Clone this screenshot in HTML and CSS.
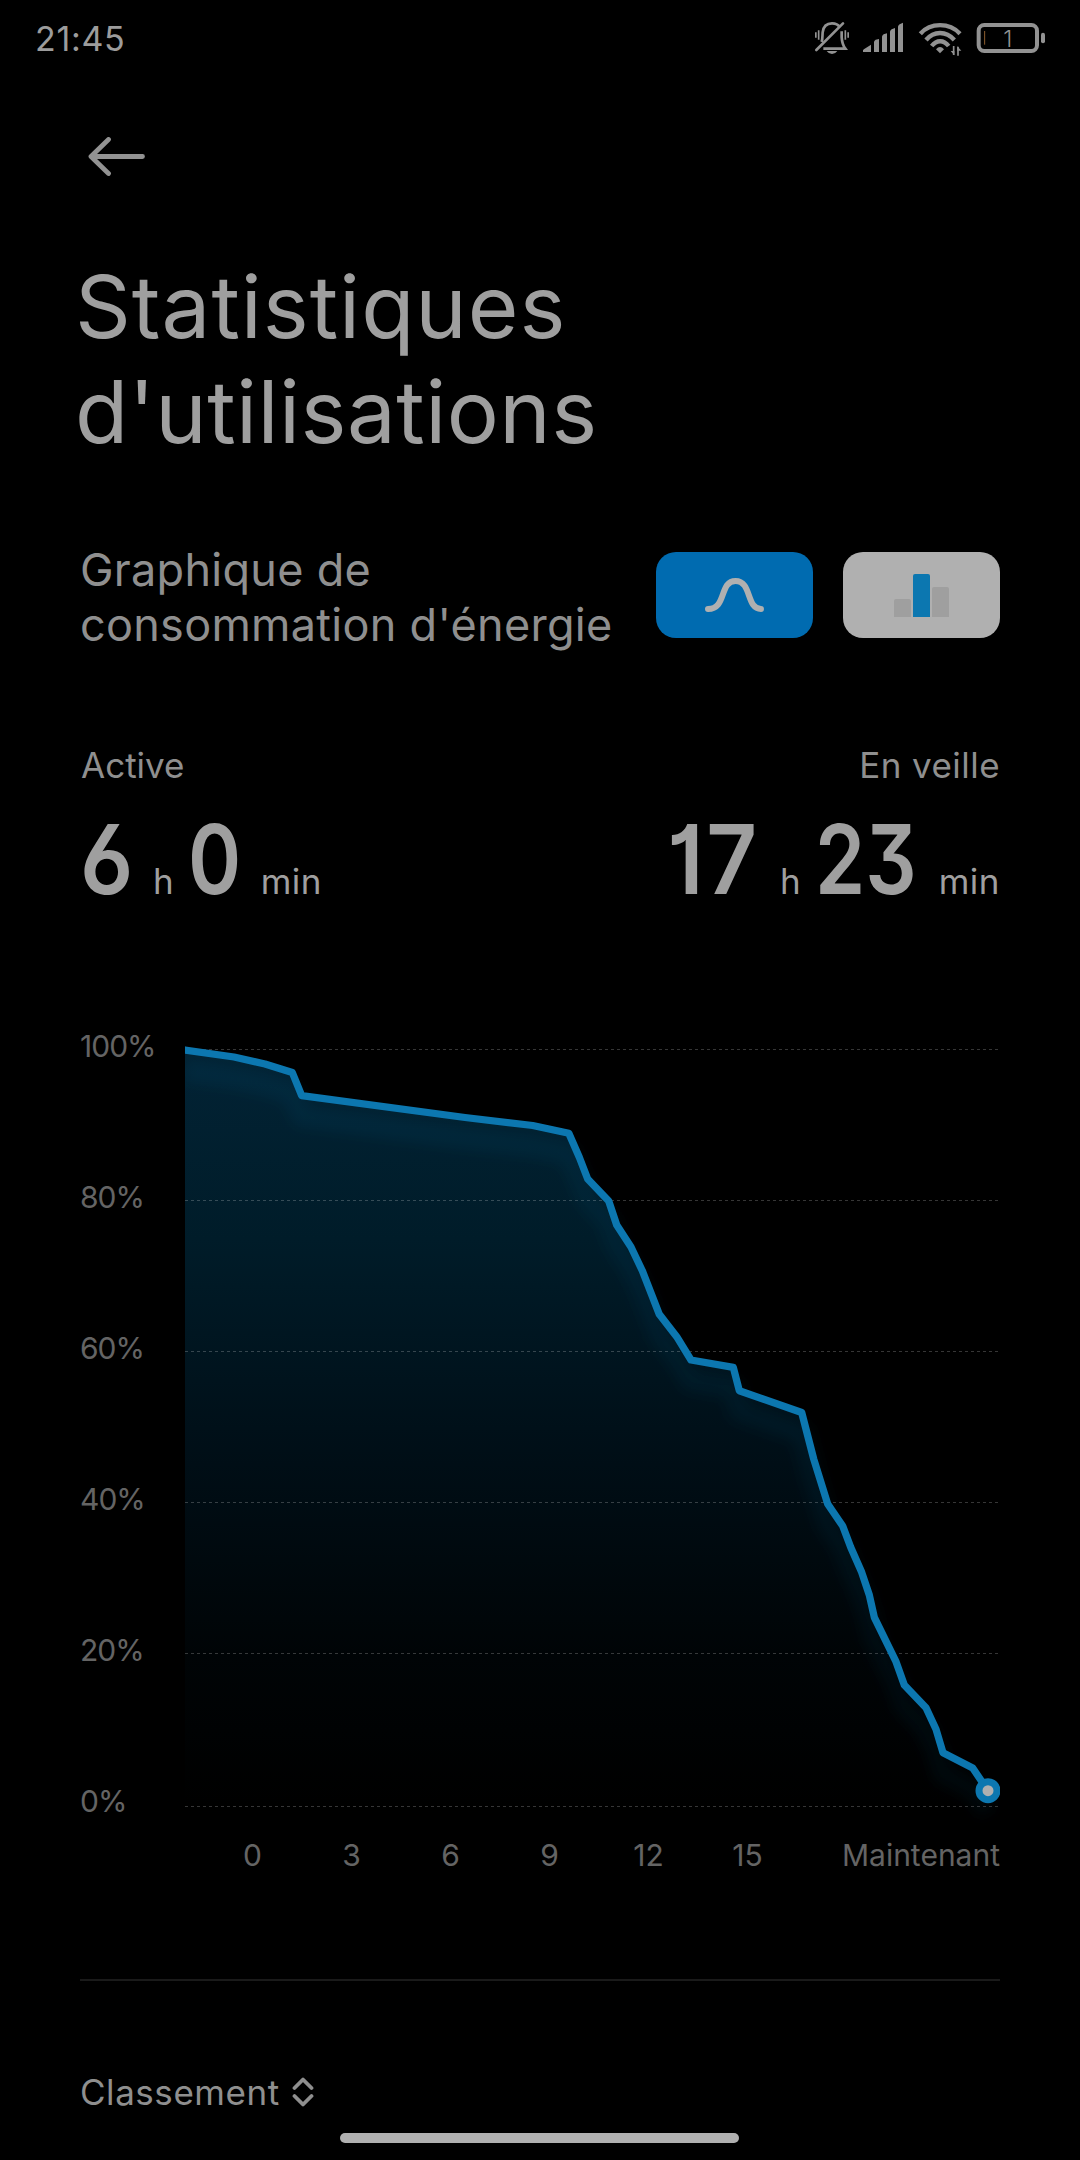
FILE: index.html
```
<!DOCTYPE html>
<html lang="fr">
<head>
	<meta charset="utf-8">
	<meta name="viewport" content="width=device-width, initial-scale=1">
	<title>Statistiques d'utilisations</title>
	<link rel="stylesheet" href="styles.css">
</head>
<body>
	<div class="status">
		<span class="clock">21:45</span>
		<div class="status-icons">
			<!-- muted bell -->
			<svg class="bell" viewBox="72 60 108 108" width="36" height="36">
				<g fill="none" stroke="#929292" stroke-width="8">
					<path d="M95 126 C98 116 97 108 98 97 C100 79 110 70 126 70 C137 70 145 74 150 82"/>
					<path d="M155 94 V112 C156 128 160 138 166 146 H100"/>
					<path d="M79 150 L159 70" stroke-linecap="round"/>
					<path d="M77.500 97 V113 M86 91 V119 M166 91 V119 M174.500 97 V113" stroke-width="5"/>
				</g>
				<path d="M110 153 H142 Q136 162 126 162 Q116 162 110 153Z" fill="#929292"/>
			</svg>
			<!-- signal strength -->
			<svg class="signal" viewBox="216 60 126 108" width="42" height="36">
				<path fill="#929292" d="M219 156 V151 Q220 148 224 146 L243 134 V156Z M252 156 V126 Q253 121 257 119 L267 117 V156Z M276 156 V110 Q277 105 281 103 L291 100 V156Z M300 156 V95 Q301 90 305 88 L315 84 V156Z M324 156 V80 Q325 75 329 73 L339 68 V156Z"/>
			</svg>
			<!-- wifi -->
			<svg class="wifi" viewBox="384 60 135 108" width="45" height="36">
				<g fill="none" stroke="#929292" stroke-width="13">
					<path d="M391 101 C422 67 478 67 510 101"/>
					<path d="M408 120 C432 92 468 92 493 120"/>
					<path d="M425 138 C440 119 461 119 476 138"/>
				</g>
				<path d="M438 148 Q450 134 462 148 L450 160Z" fill="#929292"/>
				<path d="M491 138 V165 M504 167 V140" stroke="#929292" stroke-width="5"/>
				<path d="M482 153 L493 166 V153Z M502 139 L514 152 H502Z" fill="#929292"/>
			</svg>
			<!-- battery at 1% -->
			<svg class="battery" viewBox="558 60 210 108" width="70" height="36">
				<rect x="566" y="75" width="175" height="78" rx="17" fill="none" stroke="#929292" stroke-width="12"/>
				<rect x="753" y="98" width="12" height="32" rx="6" fill="#929292"/>
				<rect x="582" y="93" width="3.500" height="41" fill="#7a5128"/>
				<text x="653" y="141" class="battery-text">1</text>
			</svg>
		</div>
	</div>

	<div class="nav">
		<svg viewBox="0 0 60 40" width="60" height="40">
			<path d="M20.500 2.500 L3 19.500 L20.500 36.500 M3.500 19.500 H54.500" fill="none" stroke="#929292" stroke-width="4.800" stroke-linecap="round" stroke-linejoin="round"/>
		</svg>
	</div>

	<h1 class="title">Statistiques<br>d'utilisations</h1>

	<div class="graph-head">
		<p class="graph-name">Graphique de<br>consommation d'énergie</p>
		<div class="switch">
			<button class="btn btn-on">
				<svg viewBox="0 0 157 86" width="157" height="86">
					<path d="M52 57 C71 57 63 29 79.500 29 C96 29 90 57 105 57" fill="none" stroke="#b0b0b0" stroke-width="6" stroke-linecap="round"/>
				</svg>
			</button>
			<button class="btn">
				<svg viewBox="0 0 157 86" width="157" height="86">
					<path d="M51 65 V49 Q51 47 53 47 H66 Q68 47 68 49 V65Z" fill="#9f9f9f"/>
					<path d="M70 65 V24 Q70 22 72 22 H85 Q87 22 87 24 V65Z" fill="#0c77b0"/>
					<path d="M89 65 V37 Q89 35 91 35 H104 Q106 35 106 37 V65Z" fill="#9f9f9f"/>
				</svg>
			</button>
		</div>
	</div>

	<div class="stats">
		<div class="stat">
			<p class="stat-label">Active</p>
			<p class="stat-value"><b class="num num-one wide">6</b><span class="hour">h</span><b class="num num-one">0</b><span class="minute">min</span></p>
		</div>
		<div class="stat stat-right">
			<p class="stat-label veille">En veille</p>
			<p class="stat-value"><b class="num num-hours wide">17</b><span class="hour">h</span><b class="num num-minutes">23</b><span class="minute">min</span></p>
		</div>
	</div>

	<div class="chart">
		<div class="y-axis">
			<span>100%</span>
			<span>80%</span>
			<span>60%</span>
			<span>40%</span>
			<span>20%</span>
			<span>0%</span>
		</div>
		<div class="plot">
			<svg viewBox="185 971 815 864" width="815" height="864">
				<defs>
					<linearGradient id="fill" gradientUnits="userSpaceOnUse" x1="0" y1="1050" x2="0" y2="1806">
						<stop offset="0" stop-color="#022335"/>
						<stop offset="0.250" stop-color="#001c29"/>
						<stop offset="0.500" stop-color="#001019"/>
						<stop offset="0.800" stop-color="#000406"/>
						<stop offset="1" stop-color="#000"/>
					</linearGradient>
					<linearGradient id="fade" gradientUnits="userSpaceOnUse" x1="0" y1="1050" x2="0" y2="1830">
						<stop offset="0" stop-color="#0c77b0" stop-opacity="0.085"/>
						<stop offset="1" stop-color="#0c77b0" stop-opacity="0.060"/>
					</linearGradient>
					<filter id="blur" filterUnits="userSpaceOnUse" x="165" y="1020" width="850" height="830">
						<feGaussianBlur stdDeviation="7"/>
					</filter>
				</defs>
				<path fill="url(#fill)" d="M185 1050 L234 1057 L265 1064 L292.300 1072.500 L301.700 1095.700 L465 1117.500 L532.700 1125.500 L568.800 1133.200 L579.300 1157.300 L587.700 1179 L608.700 1201 L616.700 1225 L631 1247 L642.300 1270.700 L659.300 1314.300 L676.700 1336.700 L691 1360 L733.300 1367.300 L739.300 1390.700 L801.700 1412.500 L813.700 1459 L827.700 1504 L842.700 1526 L850.700 1547.300 L861.700 1572.300 L869.300 1595 L874.300 1617.300 L896 1661.700 L904.300 1685 L926 1707.700 L936 1729.300 L943 1752.700 L972.700 1768 L988 1790.700 V1806 H185Z"/>
				<!-- soft glow under the curve -->
				<path transform="translate(0 21)" filter="url(#blur)" fill="none" stroke="url(#fade)" stroke-width="20" d="M185 1050 L234 1057 L265 1064 L292.300 1072.500 L301.700 1095.700 L465 1117.500 L532.700 1125.500 L568.800 1133.200 L579.300 1157.300 L587.700 1179 L608.700 1201 L616.700 1225 L631 1247 L642.300 1270.700 L659.300 1314.300 L676.700 1336.700 L691 1360 L733.300 1367.300 L739.300 1390.700 L801.700 1412.500 L813.700 1459 L827.700 1504 L842.700 1526 L850.700 1547.300 L861.700 1572.300 L869.300 1595 L874.300 1617.300 L896 1661.700 L904.300 1685 L926 1707.700 L936 1729.300 L943 1752.700 L972.700 1768 L988 1790.700"/>
				<path stroke="#fff" stroke-opacity="0.210" stroke-dasharray="3 3" d="M185 1049.500 H998 M185 1200.500 H998 M185 1351.500 H998 M185 1502.500 H998 M185 1653.500 H998 M185 1806.500 H998"/>
				<path fill="none" stroke="#0c77b0" stroke-width="7.300" stroke-linejoin="round" d="M182 1049.600 L185 1050 L234 1057 L265 1064 L292.300 1072.500 L301.700 1095.700 L465 1117.500 L532.700 1125.500 L568.800 1133.200 L579.300 1157.300 L587.700 1179 L608.700 1201 L616.700 1225 L631 1247 L642.300 1270.700 L659.300 1314.300 L676.700 1336.700 L691 1360 L733.300 1367.300 L739.300 1390.700 L801.700 1412.500 L813.700 1459 L827.700 1504 L842.700 1526 L850.700 1547.300 L861.700 1572.300 L869.300 1595 L874.300 1617.300 L896 1661.700 L904.300 1685 L926 1707.700 L936 1729.300 L943 1752.700 L972.700 1768 L988 1790.700"/>
				<circle cx="988" cy="1790.700" r="9" fill="#b0b0b0" stroke="#0c77b0" stroke-width="7"/>
			</svg>
			<div class="x-axis">
				<span>0</span>
				<span>3</span>
				<span>6</span>
				<span>9</span>
				<span>12</span>
				<span>15</span>
				<span class="now">Maintenant</span>
			</div>
		</div>
	</div>

	<div class="ranking">
		<span>Classement</span>
		<svg viewBox="0 0 22 30" width="22" height="30">
			<path d="M2.500 11 L11 2.500 L19.500 11 M2.500 19 L11 27.500 L19.500 19" fill="none" stroke="#8f8f8f" stroke-width="3.800" stroke-linecap="round" stroke-linejoin="round"/>
		</svg>
	</div>

	<div class="home-bar"></div>
</body>
</html>
```
FILE: styles.css
```
* {
	box-sizing: border-box;
	margin: 0;
	padding: 0;
}

body {
	width: 1080px;
	height: 2160px;
	overflow: hidden;
	background: #000;
	color: #8f8f8f;
	font-family: Inter, "Noto Sans", sans-serif;
	font-size: 35px;
}

svg {
	display: block;
	flex: none;
}

/* status bar */
.status {
	display: flex;
	justify-content: space-between;
	height: 77px;
	line-height: 77px;
	padding: 0 34px 0 35px;
}
.clock {
	font-size: 34px;
	letter-spacing: 0.7px;
	color: #9c9c9c;
}
.status-icons {
	display: flex;
	padding-top: 20px;
}
.signal {
	margin-left: 12px;
}
.wifi {
	margin-left: 14px;
}
.battery {
	margin-left: 13px;
}
.battery-text {
	font-size: 69px;
	font-weight: 300;
	fill: #929292;
	text-anchor: middle;
}

.nav {
	height: 177px;
	padding: 60px 0 0 88px;
}

.title {
	height: 210px;
	padding-left: 75px;
	font-size: 87px;
	font-weight: 400;
	line-height: 105px;
	letter-spacing: 0.45px;
	color: #9f9f9f;
}
.title::first-line {
	letter-spacing: 0.95px;
}

/* graph title and the two view buttons */
.graph-head {
	display: flex;
	justify-content: space-between;
	height: 110px;
	margin-top: 78px;
	padding: 0 80px;
}
.graph-name {
	font-size: 45px;
	line-height: 55px;
	letter-spacing: 0.28px;
	white-space: nowrap;
}
.switch {
	display: flex;
	gap: 30px;
	padding-top: 10px;
}
.btn {
	width: 157px;
	height: 86px;
	border: none;
	border-radius: 20px;
	background: #b0b0b0;
}
.btn-on {
	background: #006bb0;
}

/* usage times */
.stats {
	display: flex;
	justify-content: space-between;
	margin-top: 91px;
	padding: 0 80px;
}
.stat-label {
	line-height: 44px;
	padding-left: 1px;
}
.stat-right .stat-label {
	text-align: right;
}
.veille {
	letter-spacing: 0.45px;
}
.stat-value {
	display: flex;
	align-items: baseline;
	height: 110px;
	margin-top: 17px;
	line-height: 110px;
	color: #9f9f9f;
}
.num {
	font-size: 96px;
	font-weight: 600;
	font-feature-settings: "cv01", "cv03", "cv09";
	transform: scaleX(0.84);
	transform-origin: left;
}
.wide {
	transform: scaleX(0.92);
}
.num-one {
	width: 73px;
}
.num-hours {
	width: 113px;
	letter-spacing: 3px;
}
.num-minutes {
	width: 124px;
}
.hour {
	margin-right: 14px;
}
.minute {
	letter-spacing: 0.5px;
}

/* battery chart */
.chart {
	display: flex;
	height: 906px;
	margin-top: 57px;
	padding: 0 80px;
	font-size: 30px;
	color: #646464;
}
.y-axis {
	display: flex;
	flex-direction: column;
	width: 105px;
	line-height: 151px;
	letter-spacing: -1px;
}
.x-axis {
	display: flex;
	padding-left: 18px;
	line-height: 40px;
}
.x-axis span {
	width: 99px;
	text-align: center;
}
.x-axis .now {
	flex: 1;
	text-align: right;
}

.ranking {
	display: flex;
	align-items: center;
	gap: 12px;
	margin: 102px 80px 0;
	padding-top: 89px;
	border-top: 2px solid #1a1a1a;
	line-height: 44px;
	letter-spacing: 0.55px;
}

.home-bar {
	width: 399px;
	height: 10px;
	margin: 19px 0 0 340px;
	border-radius: 5px;
	background: #b0b0b0;
}
```
